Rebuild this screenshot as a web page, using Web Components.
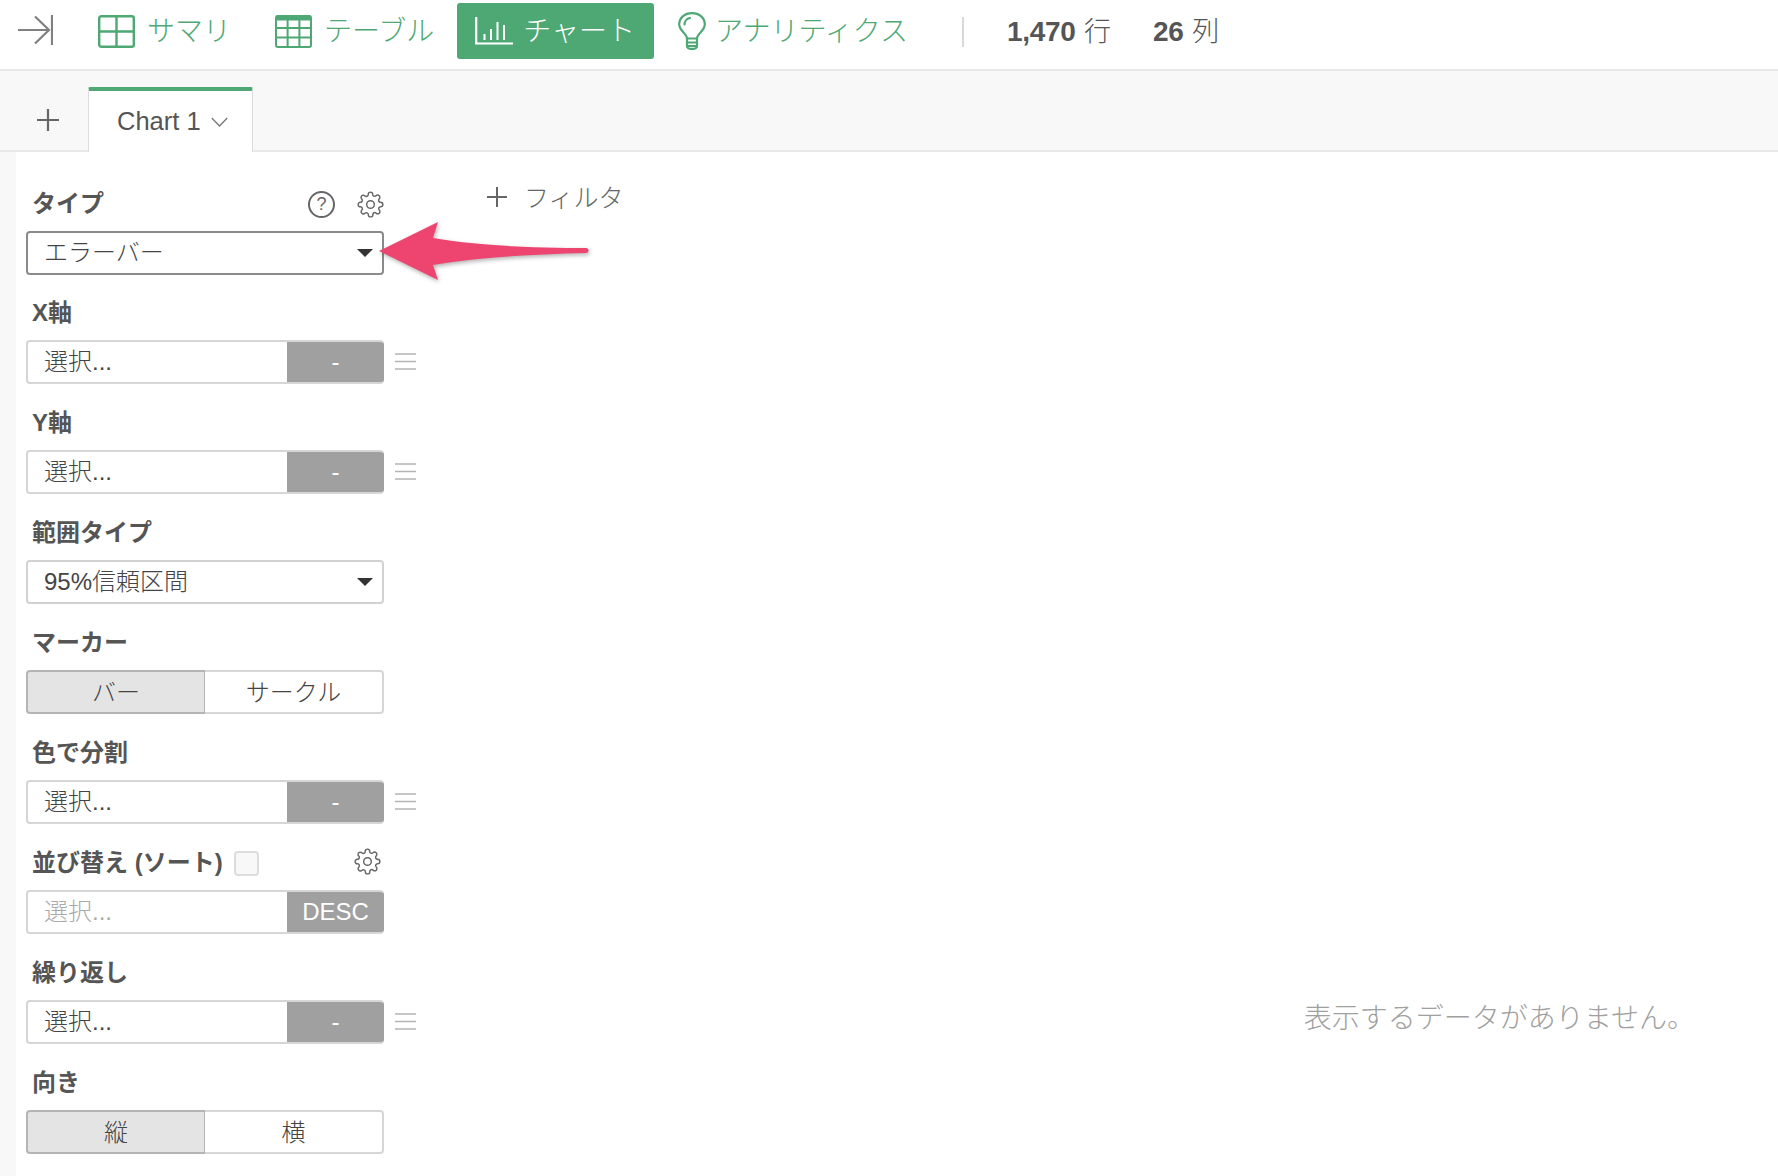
<!DOCTYPE html>
<html lang="ja">
<head>
<meta charset="utf-8">
<title>Chart</title>
<style>
  html, body { margin: 0; height: 100%; background: #fff; overflow: hidden; }
  body { font-family: "Liberation Sans", "Noto Sans CJK JP", sans-serif; color: #555; }
</style>
</head>
<body>

<template id="gear-icon">
  <svg viewBox="0 0 24 24" width="27" height="27" fill="none" stroke="#666" stroke-width="1.3" stroke-linejoin="round"><circle cx="12" cy="12" r="3.4"/><path d="M19.4 15a1.65 1.65 0 0 0 .33 1.82l.06.06a2 2 0 0 1 0 2.83 2 2 0 0 1-2.83 0l-.06-.06a1.65 1.65 0 0 0-1.82-.33 1.65 1.65 0 0 0-1 1.51V21a2 2 0 0 1-2 2 2 2 0 0 1-2-2v-.09A1.65 1.65 0 0 0 9 19.4a1.65 1.65 0 0 0-1.82.33l-.06.06a2 2 0 0 1-2.83 0 2 2 0 0 1 0-2.83l.06-.06a1.65 1.65 0 0 0 .33-1.82 1.65 1.65 0 0 0-1.51-1H3a2 2 0 0 1-2-2 2 2 0 0 1 2-2h.09A1.65 1.65 0 0 0 4.6 9a1.65 1.65 0 0 0-.33-1.82l-.06-.06a2 2 0 0 1 0-2.83 2 2 0 0 1 2.83 0l.06.06a1.65 1.65 0 0 0 1.82.33H9a1.65 1.65 0 0 0 1-1.51V3a2 2 0 0 1 2-2 2 2 0 0 1 2 2v.09a1.65 1.65 0 0 0 1 1.51 1.65 1.65 0 0 0 1.82-.33l.06-.06a2 2 0 0 1 2.83 0 2 2 0 0 1 0 2.83l-.06.06a1.65 1.65 0 0 0-.33 1.82V9a1.65 1.65 0 0 0 1.51 1H21a2 2 0 0 1 2 2 2 2 0 0 1-2 2h-.09a1.65 1.65 0 0 0-1.51 1z"/></svg>
</template>

<app-shell></app-shell>

<script>
const GREEN = '#4ea874';
const FONT = '"Liberation Sans", "Noto Sans CJK JP", sans-serif';

// nav icons, keyed by the icon attribute
const NAV_ICONS = {
  summary: `<svg width="37" height="33" viewBox="0 0 37 33" fill="none" stroke="currentColor" stroke-width="2.4"><rect x="1.2" y="1.2" width="34.6" height="30.6" rx="2"/><path d="M18.5 1v31M1 16.5h35"/></svg>`,
  table: `<svg width="37" height="33" viewBox="0 0 37 33" fill="none" stroke="currentColor" stroke-width="2"><rect x="1" y="1" width="35" height="31" rx="2"/><path d="M1 3h35" stroke-width="5"/><path d="M12.6 2v30M24.4 2v30M1 13h35M1 22.5h35"/></svg>`,
  chart: `<svg width="38" height="28" viewBox="0 0 38 28" fill="none" stroke="currentColor" stroke-width="2"><path d="M1.2 0v26.5H38" stroke-width="2.2"/><path d="M9.5 17v6M16 12v11M22.5 5v18M29 8v15"/></svg>`,
  bulb: `<svg width="28" height="38" viewBox="0 0 28 38" fill="none" stroke="currentColor" stroke-width="2.2" stroke-linecap="round"><path d="M9 26.5c0-5-7.8-7.5-7.8-14.2C1.2 6 6.5 1.2 14 1.2s12.800 4.800 12.800 11.100C26.800 19 19 21.500 19 26.500z"/><path d="M6.500 12.500C6.500 9 9 6.500 12 6"/><path d="M9 26.500v7.500c0 1.500 1.500 2.800 3 2.800h4c1.500 0 3-1.300 3-2.800v-7.500M9 30.500h10M9 34h10"/></svg>`
};

class NavItem extends HTMLElement {
  connectedCallback() {
    const active = this.hasAttribute('active');
    this.attachShadow({ mode: 'open' }).innerHTML = `
      <style>
        :host { display: block; }
        .item { display: flex; align-items: center; height: 56px; gap: var(--nav-gap, 12px); border-radius: 3px;
                padding: ${active ? '0 19px 0 18px' : '0'};
                color: ${active ? '#fff' : GREEN}; background: ${active ? GREEN : 'transparent'};
                font-size: 28px; font-weight: 300; white-space: nowrap; }
        span { padding-bottom: 4px; }
        svg { display: block; flex: none; }
      </style>
      <div class="item">${NAV_ICONS[this.getAttribute('icon')]}<span><slot></slot></span></div>`;
  }
}

class TopBar extends HTMLElement {
  connectedCallback() {
    this.attachShadow({ mode: 'open' }).innerHTML = `
      <style>
        :host { display: flex; align-items: flex-start; box-sizing: border-box; height: 71px; padding: 3px 0 0 18px;
                border-bottom: 2px solid #e8e8e8; background: #fff; }
        .collapse { display: block; margin: 12px 45px 0 0; }
        nav { display: flex; align-items: center; }
        .sep { width: 2px; height: 30px; background: #d8d8d8; margin: 14px 43px 0 54px; }
        .stats { display: flex; gap: 42px; height: 52px; align-items: center; font-size: 27px; color: #555; white-space: nowrap; }
        .stats b { font-size: 28px; letter-spacing: -.3px; }
        .stats span { font-weight: 300; margin-left: 1px; }
      </style>
      <svg class="collapse" width="35" height="30" viewBox="0 0 35 30" fill="none" stroke="#808080" stroke-width="2.200"><path d="M0 15h31M17 1.500 31 15 17 28.500"/><path d="M34 0v30"/></svg>
      <nav>
        <nav-item icon="summary" style="margin-right:44px">サマリ</nav-item>
        <nav-item icon="table" style="margin-right:23px">テーブル</nav-item>
        <nav-item icon="chart" active style="margin-right:24px;--nav-gap:10px">チャート</nav-item>
        <nav-item icon="bulb" style="--nav-gap:9px">アナリティクス</nav-item>
      </nav>
      <div class="sep"></div>
      <div class="stats"><div><b>1,470</b><span> 行</span></div><div><b>26</b><span> 列</span></div></div>`;
  }
}

class TabBar extends HTMLElement {
  connectedCallback() {
    this.attachShadow({ mode: 'open' }).innerHTML = `
      <style>
        :host { display: flex; align-items: flex-end; box-sizing: border-box; height: 81px; padding-left: 37px;
                background: #f8f8f8; border-bottom: 2px solid #e8e8e8; }
        .plus { display: block; margin: 0 29px 19px 0; }
        .tab { box-sizing: border-box; width: 165px; height: 65px; margin-bottom: -2px; padding: 0 0 0 28px;
               display: flex; align-items: center; gap: 10px; background: #fff;
               border: 1px solid #ddd; border-top: 4px solid ${GREEN}; border-bottom: 0; border-radius: 2px 2px 0 0;
               font-size: 25.500px; color: #555; white-space: nowrap; }
      </style>
      <svg class="plus" width="22" height="22" viewBox="0 0 22 22" stroke="#666" stroke-width="2.200"><path d="M11 0v22M0 11h22"/></svg>
      <div class="tab">Chart 1
        <svg width="17" height="10" viewBox="0 0 17 10" fill="none" stroke="#777" stroke-width="1.300"><path d="M.8 1 8.500 9 16.200 1"/></svg>
      </div>`;
  }
}

// label line + the control under it; extras (gear, help) go in the "tools" slot
class FormField extends HTMLElement {
  connectedCallback() {
    this.attachShadow({ mode: 'open' }).innerHTML = `
      <style>
        :host { display: block; box-sizing: border-box; height: 110px; }
        .head { display: flex; align-items: center; box-sizing: border-box; height: 30px; margin-bottom: 12px; padding: 0 0 0 6px; width: 358px; }
        .label { font-size: 24px; font-weight: 700; color: #555; white-space: nowrap; padding-bottom: 5px; }
      </style>
      <div class="head"><span class="label">${this.getAttribute('label')}</span><slot name="tools"></slot></div>
      <slot></slot>`;
  }
}

class DropSelect extends HTMLElement {
  connectedCallback() {
    const focus = this.hasAttribute('focused');
    this.attachShadow({ mode: 'open' }).innerHTML = `
      <style>
        :host { display: flex; align-items: center; justify-content: space-between; box-sizing: border-box;
                width: 358px; height: 44px; padding: 0 10px 0 16px; background: #fff; border-radius: 4px;
                border: 2px solid ${focus ? '#8a8a8a' : '#d2d2d2'}; font-size: 24px; color: #444; white-space: nowrap; }
        i { width: 0; height: 0; border: 8px solid transparent; border-top: 8px solid #333; border-bottom: 0; margin-right: -1px; }
        span { font-weight: 300; padding-bottom: 5px; }
      </style>
      <span><slot></slot></span><i></i>`;
  }
}

class ColumnPicker extends HTMLElement {
  connectedCallback() {
    const btn = this.getAttribute('button') || '-';
    const bars = this.hasAttribute('menu');
    const muted = this.hasAttribute('muted');
    this.attachShadow({ mode: 'open' }).innerHTML = `
      <style>
        :host { display: flex; align-items: center; }
        .box { display: flex; box-sizing: border-box; width: 358px; height: 44px; border-radius: 4px; overflow: hidden;
               border: 2px solid #d6d6d6; border-right: 0; background: #fff; }
        .text { flex: 1; padding-left: 16px; line-height: 40px; font-size: 24px; font-weight: 300; color: ${muted ? '#aaa' : '#444'}; }
        .btn { width: 97px; margin: -2px 0; background: #a0a0a0; color: #fff; font-size: 24px; text-align: center; line-height: 44px; border-radius: 0 4px 4px 0; }
        svg { display: block; margin: -2px 0 0 11px; }
      </style>
      <div class="box"><span class="text"><slot>選択...</slot></span><span class="btn">${btn}</span></div>
      ${bars ? `<svg width="21" height="17" viewBox="0 0 21 17" stroke="#b4b4b4" stroke-width="1.500"><path d="M0 1h21M0 8.500h21M0 16h21"/></svg>` : ''}`;
  }
}

class ToggleGroup extends HTMLElement {
  connectedCallback() {
    const [a, b] = this.getAttribute('options').split(',');
    this.attachShadow({ mode: 'open' }).innerHTML = `
      <style>
        :host { display: flex; box-sizing: border-box; width: 358px; height: 44px; font-size: 24px; color: #444; font-weight: 300; }
        div { box-sizing: border-box; display: flex; align-items: center; justify-content: center; height: 44px; padding-bottom: 3px; }
        .on { width: 179px; background: #e4e4e4; border: 2px solid #b4b4b4; border-right-width: 1px; border-radius: 4px 0 0 4px; }
        .off { width: 179px; background: #fff; border: 2px solid #d6d6d6; border-left: 0; border-radius: 0 4px 4px 0; }
      </style>
      <div class="on">${a}</div><div class="off">${b}</div>`;
  }
}

class GearIcon extends HTMLElement {
  connectedCallback() {
    const root = this.attachShadow({ mode: 'open' });
    root.innerHTML = `<style>:host { display: block; line-height: 0; }</style>`;
    root.appendChild(document.getElementById('gear-icon').content.cloneNode(true));
  }
}

class HelpIcon extends HTMLElement {
  connectedCallback() {
    this.attachShadow({ mode: 'open' }).innerHTML = `
      <style>
        :host { display: flex; align-items: center; justify-content: center; box-sizing: border-box; width: 27px; height: 27px;
                border: 2px solid #666; border-radius: 50%; font-size: 18px; color: #666; line-height: 1; }
      </style>?`;
  }
}

class SidePanel extends HTMLElement {
  connectedCallback() {
    this.attachShadow({ mode: 'open' }).innerHTML = `
      <style>
        :host { display: block; flex: none; width: 404px; padding: 37px 0 0 10px; box-sizing: border-box; }
        .tools { display: flex; align-items: center; margin-left: auto; }
        .check { box-sizing: border-box; width: 25px; height: 25px; margin-left: 11px; border: 2px solid #ddd; border-radius: 4px; background: #f8f8f8; }
        .first { height: 109px; }
      </style>
      <form-field class="first" label="タイプ">
        <div class="tools" slot="tools" style="gap:22px"><help-icon></help-icon><gear-icon></gear-icon></div>
        <drop-select focused>エラーバー</drop-select>
      </form-field>
      <form-field label="X軸"><column-picker menu></column-picker></form-field>
      <form-field label="Y軸"><column-picker menu></column-picker></form-field>
      <form-field label="範囲タイプ"><drop-select>95%信頼区間</drop-select></form-field>
      <form-field label="マーカー"><toggle-group options="バー,サークル"></toggle-group></form-field>
      <form-field label="色で分割"><column-picker menu></column-picker></form-field>
      <form-field label="並び替え (ソート)">
        <div slot="tools" class="tools" style="flex:1;margin-right:3px"><div class="check"></div><gear-icon style="margin:-4px 0 0 auto"></gear-icon></div>
        <column-picker button="DESC" muted></column-picker>
      </form-field>
      <form-field label="繰り返し"><column-picker menu></column-picker></form-field>
      <form-field label="向き"><toggle-group options="縦,横"></toggle-group></form-field>`;
  }
}

class ChartArea extends HTMLElement {
  connectedCallback() {
    this.attachShadow({ mode: 'open' }).innerHTML = `
      <style>
        :host { display: flex; flex-direction: column; flex: 1; min-width: 0; padding: 30px 83px 0 67px; box-sizing: border-box; }
        .filter { display: flex; align-items: center; gap: 17px; height: 30px; font-size: 25px; font-weight: 300; color: #666; }
        .filter span { padding-bottom: 3px; }
        svg { display: block; }
        .empty { margin-top: 787px; text-align: right; font-size: 28px; font-weight: 300; color: #a0a0a0; line-height: 40px; white-space: nowrap; }
      </style>
      <div class="filter">
        <svg width="20" height="20" viewBox="0 0 20 20" stroke="#666" stroke-width="2"><path d="M10 0v20M0 10h20"/></svg>
        <span>フィルタ</span>
      </div>
      <div class="empty">表示するデータがありません。</div>`;
  }
}

// the red annotation arrow sits over the form, so it is the one absolute thing here
class CalloutArrow extends HTMLElement {
  connectedCallback() {
    this.attachShadow({ mode: 'open' }).innerHTML = `
      <style>
        :host { position: absolute; left: 372px; top: 215px; width: 225px; height: 72px; }
        svg { display: block; filter: drop-shadow(1px 2px 2px rgba(0,0,0,.3)); }
      </style>
      <svg width="225" height="72" viewBox="372 215 225 72">
        <path d="M379 251 438 222 433 238C480 246 540 248 586 248a2.500 2.500 0 0 1 0 5C540 254 480 257 433 265L438 280Z" fill="#ee4570"/>
      </svg>`;
  }
}

class AppShell extends HTMLElement {
  connectedCallback() {
    this.attachShadow({ mode: 'open' }).innerHTML = `
      <style>
        :host { display: block; position: relative; height: 1176px; overflow: hidden; font-family: ${FONT}; }
        .main { display: flex; height: 1024px; border-left: 16px solid #f8f8f8; background: #fff; }
      </style>
      <top-bar></top-bar>
      <tab-bar></tab-bar>
      <div class="main"><side-panel></side-panel><chart-area></chart-area></div>
      <callout-arrow></callout-arrow>`;
  }
}

customElements.define('nav-item', NavItem);
customElements.define('top-bar', TopBar);
customElements.define('tab-bar', TabBar);
customElements.define('form-field', FormField);
customElements.define('drop-select', DropSelect);
customElements.define('column-picker', ColumnPicker);
customElements.define('toggle-group', ToggleGroup);
customElements.define('gear-icon', GearIcon);
customElements.define('help-icon', HelpIcon);
customElements.define('side-panel', SidePanel);
customElements.define('chart-area', ChartArea);
customElements.define('callout-arrow', CalloutArrow);
customElements.define('app-shell', AppShell);
</script>
</body>
</html>
